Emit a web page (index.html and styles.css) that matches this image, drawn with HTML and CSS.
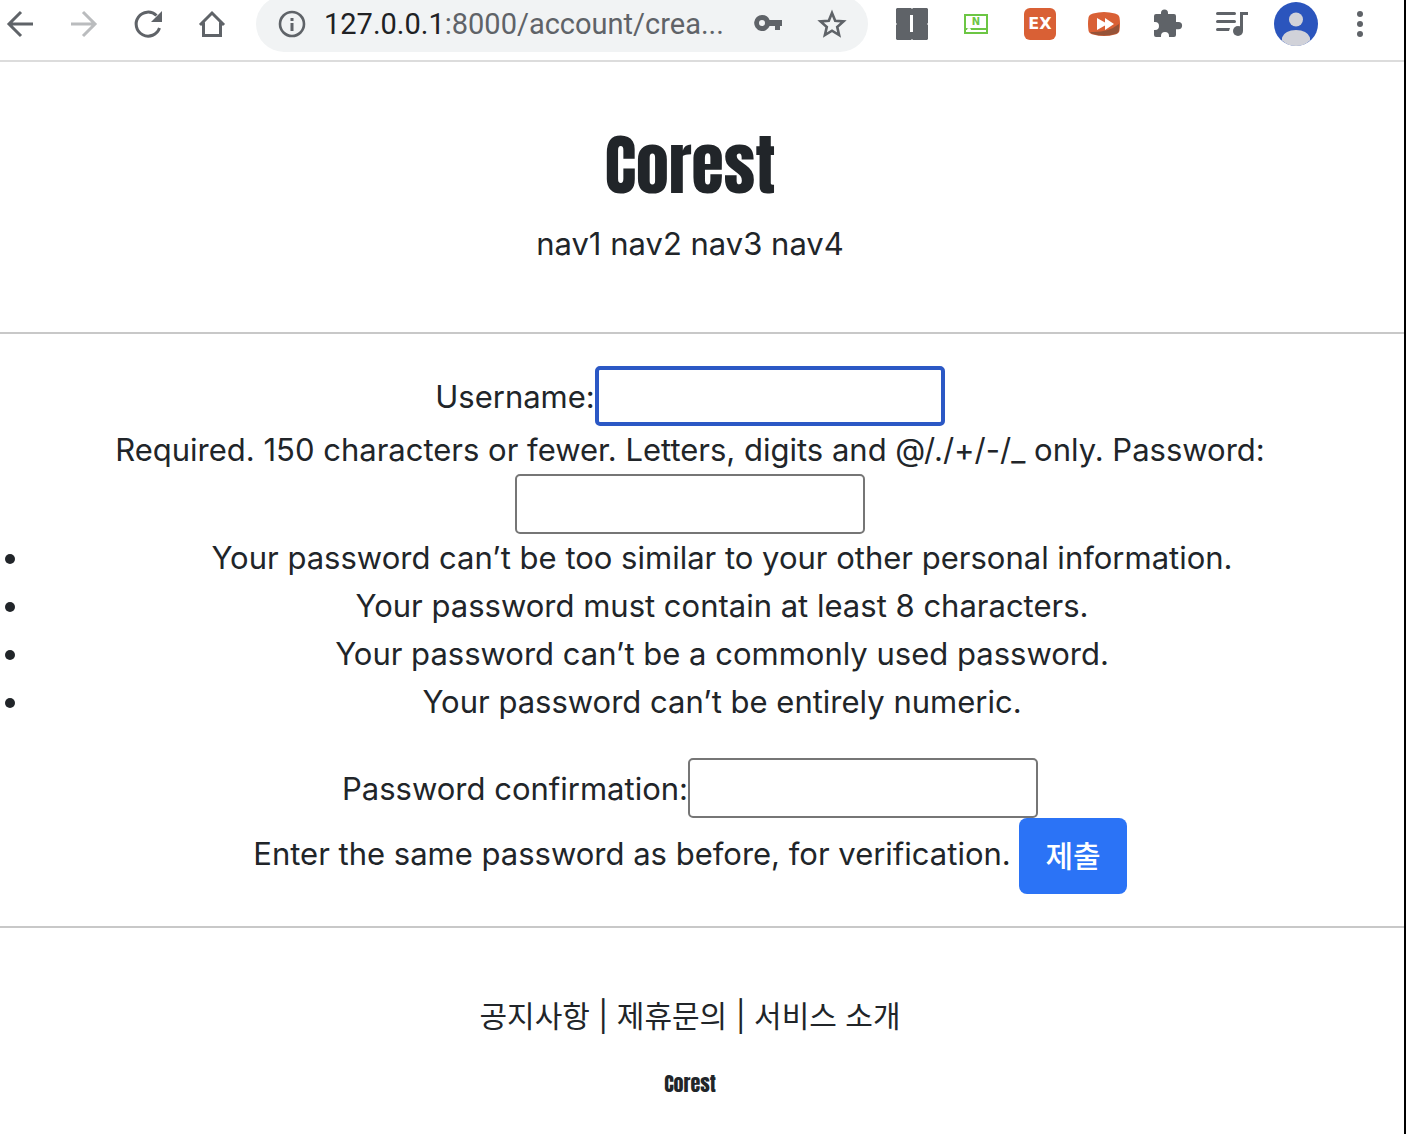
FILE: index.html
```html
<!DOCTYPE html>
<html lang="ko">
<head>
    <meta charset="UTF-8">
    <meta name="viewport" content="width=device-width, initial-scale=1.0">
    <title>Corest</title>
    <link rel="stylesheet" href="styles.css">
</head>
<body>
    <div class="window">
        <div class="toolbar">
            <button class="tool" type="button" aria-label="Back">
                <svg width="32" height="32" viewBox="0 0 32 32" fill="none" stroke="#5f6368" stroke-width="3"><path d="M29 16H5M17 4L5 16l12 12"/></svg>
            </button>
            <button class="tool" type="button" aria-label="Forward">
                <svg width="32" height="32" viewBox="0 0 32 32" fill="none" stroke="#babcbe" stroke-width="3"><path d="M3 16h24M15 4l12 12-12 12"/></svg>
            </button>
            <button class="tool" type="button" aria-label="Reload">
                <svg width="32" height="32" viewBox="0 0 32 32"><path d="M27.500 20A12 12 0 1 1 24.500 7.500" fill="none" stroke="#5f6368" stroke-width="3"/><path d="M30 3v11H19z" fill="#5f6368"/></svg>
            </button>
            <button class="tool" type="button" aria-label="Home">
                <svg width="32" height="32" viewBox="0 0 32 32" fill="none" stroke="#5f6368" stroke-width="3"><path d="M4 17L16 5l12 12M7.500 14.500v13h17v-13"/></svg>
            </button>
            <div class="omnibox">
                <svg width="32" height="32" viewBox="0 0 32 32"><circle cx="16" cy="16" r="12" fill="none" stroke="#5f6368" stroke-width="2.600"/><path d="M14.500 15h3v8h-3zM14.500 10h3v3h-3z" fill="#5f6368"/></svg>
                <div class="url"><span class="host">127.0.0.1</span>:8000/account/crea...</div>
                <button class="tool" type="button" aria-label="Passwords">
                    <svg width="32" height="32" viewBox="0 0 32 32"><path fill="#5f6368" fill-rule="evenodd" d="M10 7a8 8 0 0 1 7.600 5H30v6h-2v4h-5v-4h-5.400A8 8 0 1 1 10 7zm0 5a3 3 0 1 0 0 6 3 3 0 0 0 0-6z"/></svg>
                </button>
                <button class="tool" type="button" aria-label="Bookmark">
                    <svg width="32" height="32" viewBox="0 0 32 32" fill="none" stroke="#5f6368" stroke-width="2.600"><path d="M16 5l3.200 7.700 8.300.7-6.300 5.500 1.900 8.100-7.100-4.300L8.900 27l1.900-8.100-6.300-5.500 8.300-.7z"/></svg>
                </button>
            </div>
            <button class="tool" type="button" aria-label="Extension I">
                <svg width="32" height="32" viewBox="0 0 32 32"><path fill="#5f6368" d="M1 0h14l1 1 1-1h14l1 1v14l-1 1 1 1v14l-1 1H17l-1-1-1 1H1l-1-1V17l1-1-1-1V1z"/><path fill="#fff" d="M14 7h3v17h-3z"/></svg>
            </button>
            <button class="tool" type="button" aria-label="Extension N">
                <svg width="32" height="32" viewBox="0 0 32 32"><path fill="#6cc644" fill-rule="evenodd" d="M4 6h24v20H4zm2 2v12h20V8zm0 14v2h20v-2z"/><circle cx="9" cy="22" r="2" fill="#fff"/><text class="letter-n" x="16" y="17">N</text></svg>
            </button>
            <button class="tool" type="button" aria-label="Extension EX">
                <span class="ex">EX</span>
            </button>
            <button class="tool" type="button" aria-label="Fast forward">
                <svg width="32" height="32" viewBox="0 0 32 32"><path fill="#d96035" d="M5 5.500Q16 2.500 27 5.500q4 1 4.500 4 1 6.500 0 13-.500 3-4.500 4-11 3-22 0-4-1-4.500-4-1-6.500 0-13 .500-3 4.500-4z"/><path fill="#54453c" d="M31 16v6q-.500 3.500-4 4-11 3-22 0-2-.500-3-2 18 1 29-8z" opacity=".5"/><path fill="#fff" d="M9 10l8 4.500V10l9 6-9 6v-4.500L9 22z"/></svg>
            </button>
            <button class="tool" type="button" aria-label="Extensions">
                <svg width="32" height="32" viewBox="0 0 32 32"><path fill="#5f6368" d="M4 6h5V5a3.500 3.500 0 0 1 7 0v1h6q2 0 2 2v6h2.500a3.600 3.600 0 0 1 0 7.200H24V27q0 2-2 2h-5v-1a4 4 0 0 0-8 0v1H4q-2 0-2-2v-5h1a4 4 0 0 0 0-8H2V8q0-2 2-2z"/></svg>
            </button>
            <button class="tool" type="button" aria-label="Media controls">
                <svg width="32" height="32" viewBox="0 0 32 32" fill="#5f6368"><path d="M1.500 4h17a1.500 1.500 0 0 1 0 3h-17a1.500 1.500 0 0 1 0-3zM1.500 12h17a1.500 1.500 0 0 1 0 3h-17a1.500 1.500 0 0 1 0-3zM1.500 20H14l-1 3H1.500a1.500 1.500 0 0 1 0-3zM24 4h8v3h-5v16h-3z"/><circle cx="22" cy="23" r="5"/></svg>
            </button>
            <button class="tool" type="button" aria-label="Profile">
                <svg width="44" height="44" viewBox="0 0 44 44"><circle cx="22" cy="22" r="22" fill="#2b55bd"/><circle cx="22" cy="17.500" r="7" fill="#d1d2d9"/><path fill="#d1d2d9" d="M8 38.500v-3Q11 28 22 28t14 7.500v3Q30 44 22 44T8 38.500z"/></svg>
            </button>
            <button class="tool" type="button" aria-label="Menu">
                <svg width="32" height="32" viewBox="0 0 32 32" fill="#5f6368"><circle cx="16" cy="6" r="3"/><circle cx="16" cy="16" r="3"/><circle cx="16" cy="26" r="3"/></svg>
            </button>
        </div>

        <header class="header">
            <h1 class="logo">Corest</h1>
            <nav>
                <span>nav1</span>
                <span>nav2</span>
                <span>nav3</span>
                <span>nav4</span>
            </nav>
        </header>

        <hr>

        <form class="signup" action="#" method="post">
            <div>
                <label for="username">Username:</label><input type="text" id="username" class="focused" maxlength="150">
            </div>
            <div>
                Required. 150 characters or fewer. Letters, digits and @/./+/-/_ only.
                <label for="password1">Password:</label>
            </div>
            <div>
                <input type="password" id="password1">
            </div>
            <ul>
                <li>Your password can’t be too similar to your other personal information.</li>
                <li>Your password must contain at least 8 characters.</li>
                <li>Your password can’t be a commonly used password.</li>
                <li>Your password can’t be entirely numeric.</li>
            </ul>
            <div>
                <label for="password2">Password confirmation:</label><input type="password" id="password2">
            </div>
            <div class="submit-row">
                Enter the same password as before, for verification.
                <button class="btn" type="submit">제출</button>
            </div>
        </form>

        <hr>

        <footer class="footer">
            <div>
                <span>공지사항</span> |
                <span>제휴문의</span> |
                <span>서비스 소개</span>
            </div>
            <h6 class="logo">Corest</h6>
        </footer>
    </div>
</body>
</html>
```
FILE: styles.css
```css
* {
    box-sizing: border-box;
}
body {
    margin: 0;
    background: #fff;
    color: #212529;
    font-family: Inter, "Noto Sans CJK KR", sans-serif;
    font-size: 31px;
    line-height: 48px;
}
.window {
    min-height: 100vh;
    border-right: 2px solid #000;
    overflow: hidden;
}

/* browser bar */
.toolbar {
    display: flex;
    align-items: center;
    height: 66px;
    margin-top: -4px;
    padding: 0 12px 8px 0;
    border-bottom: 2px solid #dcdcdc;
}
.tool {
    display: flex;
    align-items: center;
    justify-content: center;
    flex: none;
    width: 64px;
    height: 56px;
    padding: 0;
    border: none;
    background: none;
}
.toolbar > .tool:first-child {
    margin-left: -12px;
}
.omnibox {
    display: flex;
    align-items: center;
    flex: 1;
    min-width: 0;
    height: 56px;
    margin: 0 12px;
    padding: 0 4px 0 20px;
    border-radius: 28px;
    background: #f1f3f4;
}
.omnibox svg {
    flex: none;
}
.url {
    flex: 1;
    min-width: 0;
    padding-left: 16px;
    overflow: hidden;
    white-space: nowrap;
    color: #5f6368;
    font-family: Roboto, sans-serif;
    font-size: 29px;
}
.host {
    color: #202124;
}
.ex {
    width: 32px;
    border-radius: 6px;
    background: #d96035;
    color: #fff;
    font-family: "DejaVu Sans", sans-serif;
    font-size: 16px;
    font-weight: bold;
    line-height: 32px;
}
.letter-n {
    fill: #6cc644;
    font-family: "DejaVu Sans", sans-serif;
    font-size: 10px;
    font-weight: bold;
    text-anchor: middle;
}

/* page */
.logo {
    margin: 0;
    font-family: Anton, Impact, sans-serif;
    font-weight: normal;
}
.header, .signup, .footer {
    padding-right: 24px;
    text-align: center;
}
.header {
    padding-top: 64px;
    padding-bottom: 64px;
}
h1.logo {
    margin-bottom: 16px;
    font-size: 66px;
    line-height: 78px;
}
hr {
    height: 2px;
    margin: 0;
    border: none;
    background: #c8c8c8;
}
.signup {
    padding-top: 32px;
    padding-bottom: 32px;
}
.signup input {
    width: 350px;
    height: 60px;
    padding: 2px 4px;
    border: 2px solid #767676;
    border-radius: 5px;
    background: #fff;
    font: inherit;
    vertical-align: baseline;
    outline: none;
}
.signup input.focused {
    border: 4px solid #2b58c5;
}
.signup ul {
    margin: 0 0 32px;
    padding-left: 32px;
}
.signup li {
    padding-left: 32px;
}
.submit-row {
    line-height: 72px;
}
.btn {
    height: 76px;
    padding: 0 26px;
    border: none;
    border-radius: 8px;
    background: #2b73f6;
    color: #fff;
    font: inherit;
    font-size: 30px;
    font-weight: 500;
    vertical-align: top;
}
.footer {
    padding-top: 64px;
    padding-bottom: 32px;
}
.footer div {
    font-size: 30px;
}
h6.logo {
    margin-top: 32px;
    font-size: 20px;
    line-height: 24px;
}
```
